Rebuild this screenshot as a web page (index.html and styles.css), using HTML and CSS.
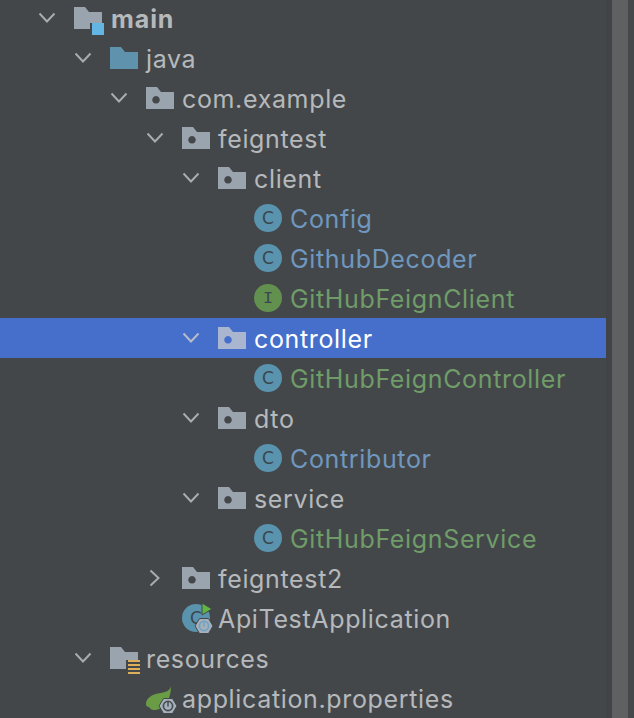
FILE: index.html
```html
<!DOCTYPE html>
<html lang="en">

<head>
    <meta charset="UTF-8">
    <meta name="viewport" content="width=device-width, initial-scale=1.0">
    <title>project tree</title>
    <link rel="stylesheet" href="styles.css">
</head>

<body>
    <svg class="defs" width="0" height="0" aria-hidden="true">
        <symbol id="open" viewBox="0 0 18 12">
            <path d="M1.5 1.5 L9 9.5 L16.5 1.5" fill="none" stroke="currentColor" stroke-width="2" />
        </symbol>
        <symbol id="closed" viewBox="0 0 12 18">
            <path d="M1.5 1.5 L9.5 9 L1.5 16.5" fill="none" stroke="currentColor" stroke-width="2" />
        </symbol>
        <symbol id="pkg" viewBox="0 0 28 22">
            <path fill-rule="evenodd" d="M0 0 H11 L15 5 H28 V22 H0 Z M10 9 a3.8 3.8 0 1 0 0.01 0 Z" fill="currentColor" />
        </symbol>
        <symbol id="folder" viewBox="0 0 28 22">
            <path d="M0 0 H11 L15 5 H28 V22 H0 Z" fill="currentColor" />
        </symbol>
        <symbol id="hex" viewBox="-1 -1 20 18">
            <path d="M0 8 L4.5 0.5 H13.5 L18 8 L13.5 15.5 H4.5 Z" fill="#a5b0ba" stroke="#44474a" stroke-width="1" />
            <circle cx="9" cy="8" r="4.6" fill="none" stroke="currentColor" stroke-width="1.7" />
            <path d="M9 4.5 V8.5" stroke="#a5b0ba" stroke-width="3.4" />
            <path d="M9 3.4 V8.5" stroke="currentColor" stroke-width="1.5" />
        </symbol>
    </svg>

    <div class="panel">
        <ul class="tree">
            <li class="row level-0 bold">
                <svg class="chevron"><use href="#open" /></svg>
                <span class="icon-box">
                    <svg class="folder" viewBox="0 0 28 22">
                        <path d="M0 0 H11 L15 5 H28 V16 H16 V22 H0 Z" fill="#9aa4ae" />
                    </svg>
                    <span class="module-badge"></span>
                </span>
                <span class="label">main</span>
            </li>
            <li class="row level-1">
                <svg class="chevron"><use href="#open" /></svg>
                <span class="icon-box src"><svg class="folder"><use href="#folder" /></svg></span>
                <span class="label">java</span>
            </li>
            <li class="row level-2">
                <svg class="chevron"><use href="#open" /></svg>
                <span class="icon-box"><svg class="folder"><use href="#pkg" /></svg></span>
                <span class="label">com.example</span>
            </li>
            <li class="row level-3">
                <svg class="chevron"><use href="#open" /></svg>
                <span class="icon-box"><svg class="folder"><use href="#pkg" /></svg></span>
                <span class="label">feigntest</span>
            </li>
            <li class="row level-4">
                <svg class="chevron"><use href="#open" /></svg>
                <span class="icon-box"><svg class="folder"><use href="#pkg" /></svg></span>
                <span class="label">client</span>
            </li>
            <li class="row leaf-5">
                <span class="icon-box"><span class="badge">C</span></span>
                <span class="label blue">Config</span>
            </li>
            <li class="row leaf-5">
                <span class="icon-box"><span class="badge">C</span></span>
                <span class="label blue">GithubDecoder</span>
            </li>
            <li class="row leaf-5">
                <span class="icon-box"><span class="badge iface">I</span></span>
                <span class="label green">GitHubFeignClient</span>
            </li>
            <li class="row level-4 selected">
                <svg class="chevron"><use href="#open" /></svg>
                <span class="icon-box"><svg class="folder"><use href="#pkg" /></svg></span>
                <span class="label">controller</span>
            </li>
            <li class="row leaf-5">
                <span class="icon-box"><span class="badge">C</span></span>
                <span class="label green">GitHubFeignController</span>
            </li>
            <li class="row level-4">
                <svg class="chevron"><use href="#open" /></svg>
                <span class="icon-box"><svg class="folder"><use href="#pkg" /></svg></span>
                <span class="label">dto</span>
            </li>
            <li class="row leaf-5">
                <span class="icon-box"><span class="badge">C</span></span>
                <span class="label blue">Contributor</span>
            </li>
            <li class="row level-4">
                <svg class="chevron"><use href="#open" /></svg>
                <span class="icon-box"><svg class="folder"><use href="#pkg" /></svg></span>
                <span class="label">service</span>
            </li>
            <li class="row leaf-5">
                <span class="icon-box"><span class="badge">C</span></span>
                <span class="label green">GitHubFeignService</span>
            </li>
            <li class="row level-3">
                <svg class="chevron closed"><use href="#closed" /></svg>
                <span class="icon-box"><svg class="folder"><use href="#pkg" /></svg></span>
                <span class="label">feigntest2</span>
            </li>
            <li class="row leaf-3">
                <span class="icon-box">
                    <span class="badge">C</span>
                    <svg class="run-arrow" viewBox="-1 -1 12 14"><path d="M0 0 L10 6 L0 12 Z" fill="#62b543" stroke="#44474a" stroke-width="1" /></svg>
                    <svg class="hex hex-run"><use href="#hex" /></svg>
                </span>
                <span class="label">ApiTestApplication</span>
            </li>
            <li class="row level-1">
                <svg class="chevron"><use href="#open" /></svg>
                <span class="icon-box">
                    <svg class="folder" viewBox="0 0 28 22">
                        <path d="M0 0 H11 L15 5 H28 V13 H16 V22 H0 Z" fill="#9aa4ae" />
                    </svg>
                    <span class="res-lines"></span>
                </span>
                <span class="label">resources</span>
            </li>
            <li class="row leaf-2">
                <span class="icon-box">
                    <svg class="leaf-icon" viewBox="0 0 25 24">
                        <path d="M25 0 C24 4 21 6 15 7 C6 8 0 12 0 18 C0 20 1 21 3 21 C4 22 5 24 8 24 C18 24 25 14 25 0 Z" fill="#6a9c45" />
                    </svg>
                    <svg class="hex hex-spring"><use href="#hex" /></svg>
                </span>
                <span class="label">application.properties</span>
            </li>
        </ul>
        <div class="gutter"></div>
        <div class="scrollbar"></div>
        <div class="scroll-end"></div>
    </div>
</body>

</html>
```

FILE: styles.css
```css
body {
    margin: 0;
    height: 718px;
    overflow: hidden;
    background-color: #44474a;
    font-family: Inter, "Noto Sans", sans-serif;
}

.defs {
    position: absolute;
}

.panel {
    display: flex;
    height: 718px;
}

.tree {
    list-style: none;
    width: 606px;
    margin: -2px 0 0;
    padding: 0;
}

.row {
    display: flex;
    align-items: center;
    height: 40px;
    color: #b6b9bb;
    font-size: 25px;
    letter-spacing: 0.65px;
    white-space: nowrap;
}

.level-0 { padding-left: 38px; }
.level-1 { padding-left: 74px; }
.level-2 { padding-left: 110px; }
.level-3 { padding-left: 146px; }
.level-4 { padding-left: 182px; }

.leaf-2 { padding-left: 146px; }
.leaf-3 { padding-left: 182px; }
.leaf-5 { padding-left: 254px; }

.chevron {
    width: 18px;
    height: 12px;
    margin-right: 18px;
    color: #a9acae;
}

.chevron.closed {
    width: 12px;
    height: 18px;
    margin-left: 3px;
    margin-right: 21px;
}

.icon-box {
    position: relative;
    display: flex;
    align-items: center;
    width: 28px;
    height: 28px;
    margin-right: 8px;
    color: #9aa4ae;
}

.src {
    color: #5f92ad;
}

.folder {
    width: 28px;
    height: 22px;
}

.module-badge {
    position: absolute;
    left: 18px;
    top: 19px;
    width: 12px;
    height: 12px;
    background-color: #63b6e3;
}

.res-lines {
    position: absolute;
    left: 18px;
    top: 16px;
    width: 12px;
    height: 14px;
    background: repeating-linear-gradient(#dcae5a 0, #dcae5a 2px, transparent 2px, transparent 4px);
}

.badge {
    display: flex;
    align-items: center;
    justify-content: center;
    width: 28px;
    height: 28px;
    border-radius: 50%;
    background-color: #5a93ad;
    color: #3a4650;
    font-family: "DejaVu Sans", sans-serif;
    font-size: 17px;
    letter-spacing: 0;
}

.badge.iface {
    background-color: #62914f;
    font-family: "Liberation Mono", monospace;
    font-size: 17px;
}

.run-arrow {
    position: absolute;
    left: 19px;
    top: -2px;
    width: 12px;
    height: 14px;
}

.hex {
    position: absolute;
    left: 12px;
    top: 13px;
    width: 20px;
    height: 18px;
}

.hex-run {
    color: #6fa3c4;
}

.hex-spring {
    color: #474c51;
}

.leaf-icon {
    position: absolute;
    left: 0;
    top: 2px;
    width: 25px;
    height: 24px;
}

.label {
    padding-top: 2px;
    line-height: 38px;
}

.bold .label {
    padding-left: 1px;
    font-weight: 700;
    letter-spacing: 0.9px;
}

.blue { color: #6f97bf; }
.green { color: #6f9c68; }

.selected {
    background-color: #456fcb;
}

.selected .label {
    color: #ffffff;
}

.selected .icon-box {
    color: #aab6cf;
}

.selected .chevron {
    color: #b6bcc8;
}

.gutter {
    width: 6px;
    background-color: #414346;
}

.scrollbar {
    width: 16px;
    background-color: #5f6062;
}

.scroll-end {
    width: 6px;
    background-color: #45484a;
}
```
